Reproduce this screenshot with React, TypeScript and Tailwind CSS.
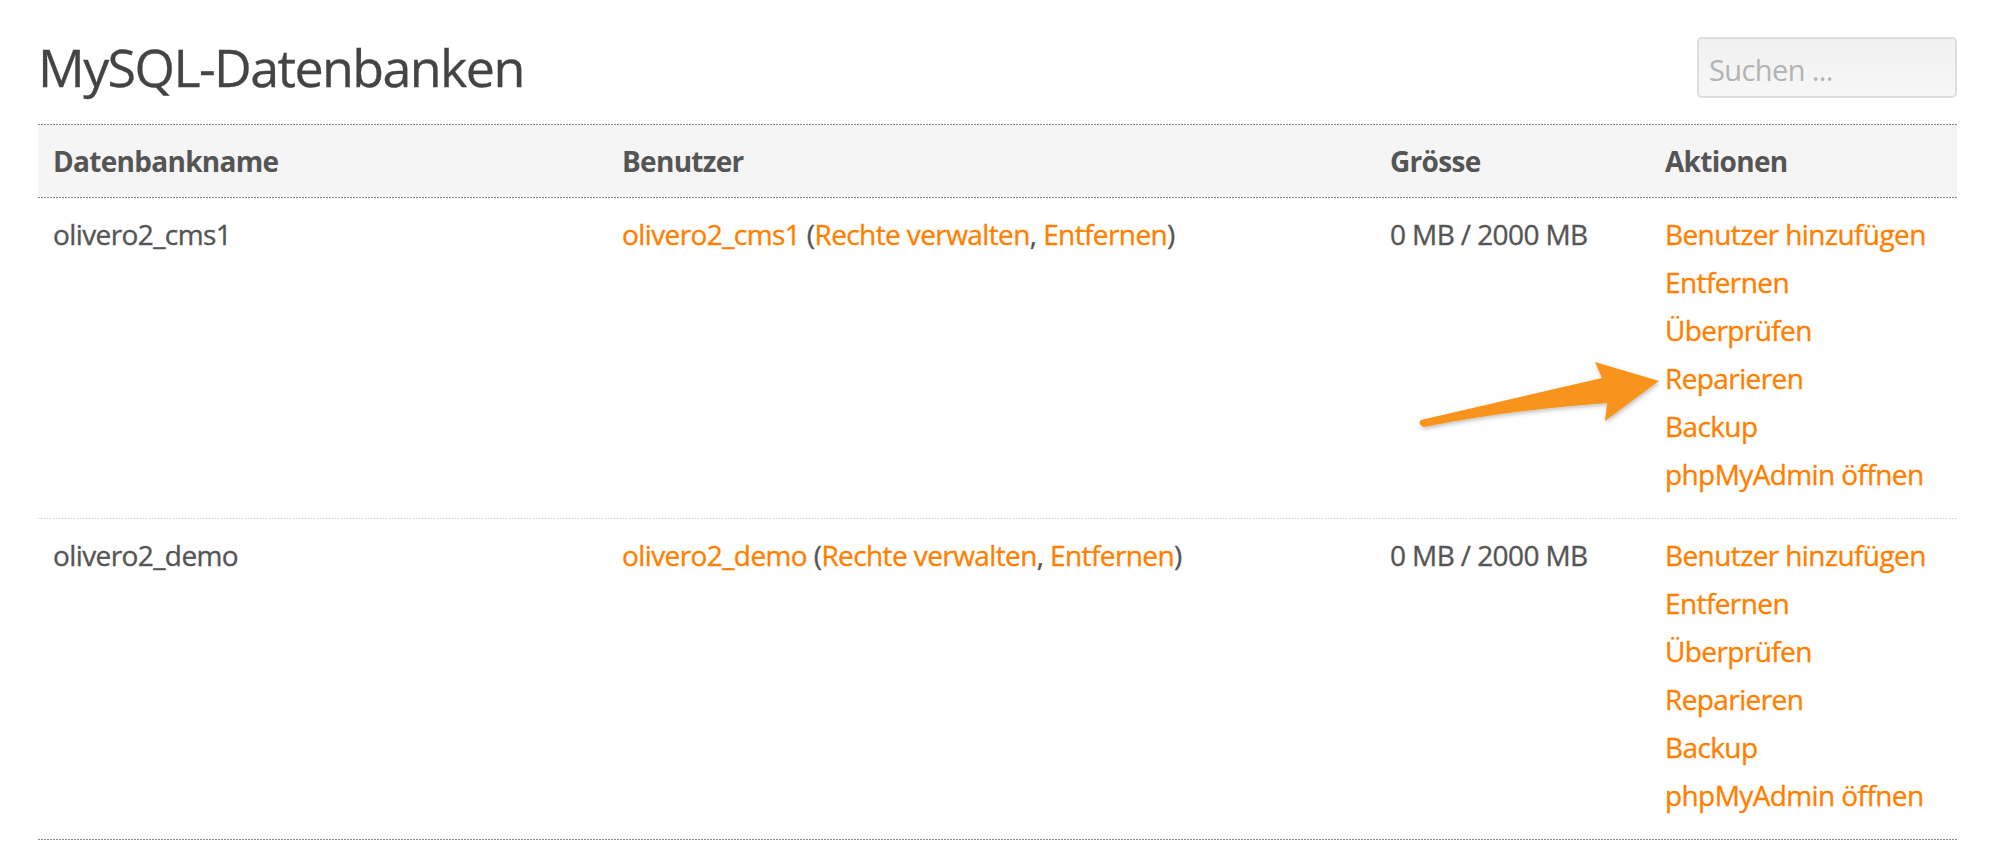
const ORANGE = "text-[#ff7f00]"

interface Db {
  name: string
  user: string
  size: string
}

const databases: Db[] = [
  { name: "olivero2_cms1", user: "olivero2_cms1", size: "0 MB / 2000 MB" },
  { name: "olivero2_demo", user: "olivero2_demo", size: "0 MB / 2000 MB" },
]

const actions = [
  "Benutzer hinzufügen",
  "Entfernen",
  "Überprüfen",
  "Reparieren",
  "Backup",
  "phpMyAdmin öffnen",
]

const Dots = ({ light }: { light?: boolean }) => (
  <div
    className={
      light
        ? "h-px bg-[repeating-linear-gradient(to_right,#c4c4c4_0_1px,transparent_1px_3px)]"
        : "h-px bg-[repeating-linear-gradient(to_right,#8a8a8a_0_2px,transparent_2px_3px)]"
    }
  />
)

const cols = "grid grid-cols-[569px_768px_275px_1fr]"

const Arrow = () => (
  <svg
    className="absolute left-0 top-0 pointer-events-none"
    width="2010"
    height="867"
    viewBox="0 0 2010 867"
  >
    <defs>
      <filter id="sh" x="-10%" y="-30%" width="120%" height="160%">
        <feDropShadow dx="1" dy="2" stdDeviation="2" floodColor="#000" floodOpacity="0.25" />
      </filter>
    </defs>
    <path
      d="M1421 420 Q1520 397 1602 378 L1595 362 L1659 381 L1605 421 L1607 403 Q1510 410 1424 427 Q1417 424 1421 420 Z"
      fill="#f8931c"
      filter="url(#sh)"
    />
  </svg>
)

export default function App() {
  return (
    <div className="relative w-[2010px] h-[867px] bg-white font-['Open_Sans',sans-serif] text-[#555] overflow-hidden">
      <div className="pl-[38px] pr-[53px]">
        <div className="flex justify-between items-start pt-[37px]">
          <h1 className="text-[52px] leading-[60px] text-[#444] font-normal tracking-[-1.6px] [-webkit-text-stroke:0.3px_#444]">
            MySQL-Datenbanken
          </h1>
          <input
            type="text"
            placeholder="Suchen ..."
            className="w-[260px] h-[61px] px-[10px] pt-[3px] rounded-[5px] border-2 border-[#dedede] bg-[linear-gradient(#f0f0f0,#f7f7f7)] text-[29px] tracking-[-0.6px] outline-none placeholder:text-[#b3b3b3] font-['Open_Sans',sans-serif]"
          />
        </div>

        <div className="mt-[26px]">
          <Dots />
          <div className={`${cols} bg-[#f5f5f5] font-bold text-[28px] leading-[48px] tracking-[-0.7px] text-[#555]`}>
            <div className="px-[15px] py-3">Datenbankname</div>
            <div className="px-[15px] py-3">Benutzer</div>
            <div className="px-[15px] py-3">Grösse</div>
            <div className="px-[15px] py-3">Aktionen</div>
          </div>
          <Dots />
          {databases.map((db, i) => (
            <div key={db.name}>
              <div className={`${cols} text-[28px] leading-[48px] tracking-[-0.6px] [-webkit-text-stroke:0.35px_currentColor]`}>
                <div className="px-[15px] pt-3 pb-5">{db.name}</div>
                <div className="px-[15px] pt-3 pb-5">
                  <a className={ORANGE}>{db.user}</a> (
                  <a className={ORANGE}>Rechte verwalten</a>, <a className={ORANGE}>Entfernen</a>)
                </div>
                <div className="px-[15px] pt-3 pb-5">{db.size}</div>
                <div className="px-[15px] pt-3 pb-5 flex flex-col">
                  {actions.map((a) => (
                    <a key={a} className={ORANGE}>
                      {a}
                    </a>
                  ))}
                </div>
              </div>
              <Dots light={i < databases.length - 1} />
            </div>
          ))}
        </div>
      </div>
      <Arrow />
    </div>
  )
}
